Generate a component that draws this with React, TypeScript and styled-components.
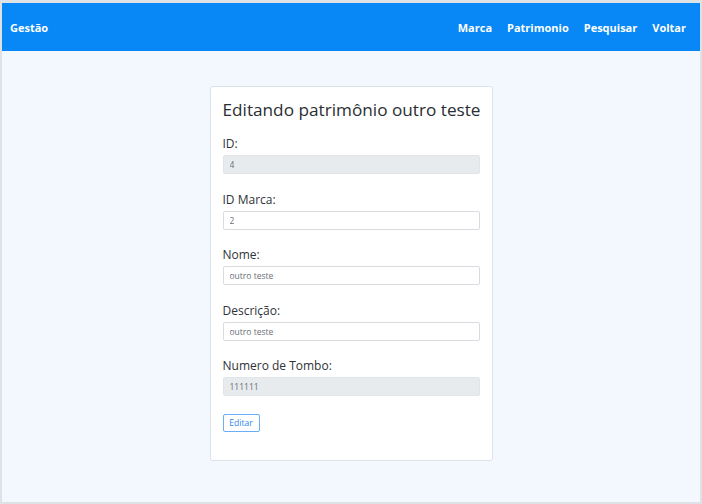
import React from "react";
import styled, { createGlobalStyle } from "styled-components";

const Global = createGlobalStyle`
  html, body { margin: 0; padding: 0; }
  body { font-family: "Open Sans", "Noto Sans", sans-serif; }
  * { box-sizing: border-box; }
`;

const Frame = styled.div`
  width: 702px;
  height: 504px;
  border: 2px solid #dfe2e5;
  border-top-width: 3px;
  background: #f3f8ff;
  display: flex;
  flex-direction: column;
  align-items: stretch;
  overflow: hidden;
`;

const NavBar = styled.nav`
  height: 48px;
  background: #0788f6;
  display: flex;
  align-items: center;
  justify-content: space-between;
  padding: 0 14px 0 8px;
  flex-shrink: 0;
`;

const Brand = styled.span`
  color: #fff;
  font-size: 11px;
  font-weight: bold;
`;

const NavLinks = styled.div`
  display: flex;
  gap: 15px;
`;

const NavLink = styled.a`
  color: #fff;
  font-size: 11px;
  font-weight: bold;
  text-decoration: none;
`;

const Main = styled.main`
  flex: 1;
  display: flex;
  justify-content: center;
  padding-top: 35px;
`;

const Card = styled.div`
  width: 283px;
  height: 375px;
  background: #fff;
  border: 1px solid #dde3ea;
  border-radius: 3px;
  padding: 12px 12px 0 12px;
  display: flex;
  flex-direction: column;
`;

const Title = styled.h1`
  margin: 0 0 15px 0;
  font-size: 17.2px;
  font-weight: normal;
  color: #2a2e33;
  line-height: 22px;
  white-space: nowrap;
`;

const Group = styled.div`
  display: flex;
  flex-direction: column;
  gap: 4px;
  margin-bottom: 17.5px;
`;

const Label = styled.label`
  font-size: 12px;
  color: #2f3337;
  line-height: 15px;
`;

const Input = styled.input<{ $disabled?: boolean }>`
  width: 257px;
  height: 19px;
  border: 1px solid ${(p) => (p.$disabled ? "#e2e5e8" : "#d7dce1")};
  border-radius: 2px;
  background: ${(p) => (p.$disabled ? "#e8ebee" : "#fff")};
  font-family: "Open Sans", "Noto Sans", sans-serif;
  font-size: 8.5px;
  color: #6a6f75;
  padding: 0 6px;
  outline: none;
`;

const Button = styled.button`
  align-self: flex-start;
  height: 18px;
  width: 37px;
  padding: 0;
  border: 1px solid #6aaef5;
  border-radius: 2px;
  background: #fff;
  color: #2f86e8;
  font-family: "Open Sans", "Noto Sans", sans-serif;
  font-size: 8.5px;
`;

const fields = [
  { label: "ID:", value: "4", disabled: true },
  { label: "ID Marca:", value: "2", disabled: false },
  { label: "Nome:", value: "outro teste", disabled: false },
  { label: "Descrição:", value: "outro teste", disabled: false },
  { label: "Numero de Tombo:", value: "111111", disabled: true },
];

export default function App() {
  return (
    <>
      <Global />
      <Frame>
        <NavBar>
          <Brand>Gestão</Brand>
          <NavLinks>
            <NavLink>Marca</NavLink>
            <NavLink>Patrimonio</NavLink>
            <NavLink>Pesquisar</NavLink>
            <NavLink>Voltar</NavLink>
          </NavLinks>
        </NavBar>
        <Main>
          <Card>
            <Title>Editando patrimônio outro teste</Title>
            {fields.map((f) => (
              <Group key={f.label}>
                <Label>{f.label}</Label>
                <Input $disabled={f.disabled} disabled={f.disabled} defaultValue={f.value} readOnly />
              </Group>
            ))}
            <Button>Editar</Button>
          </Card>
        </Main>
      </Frame>
    </>
  );
}
